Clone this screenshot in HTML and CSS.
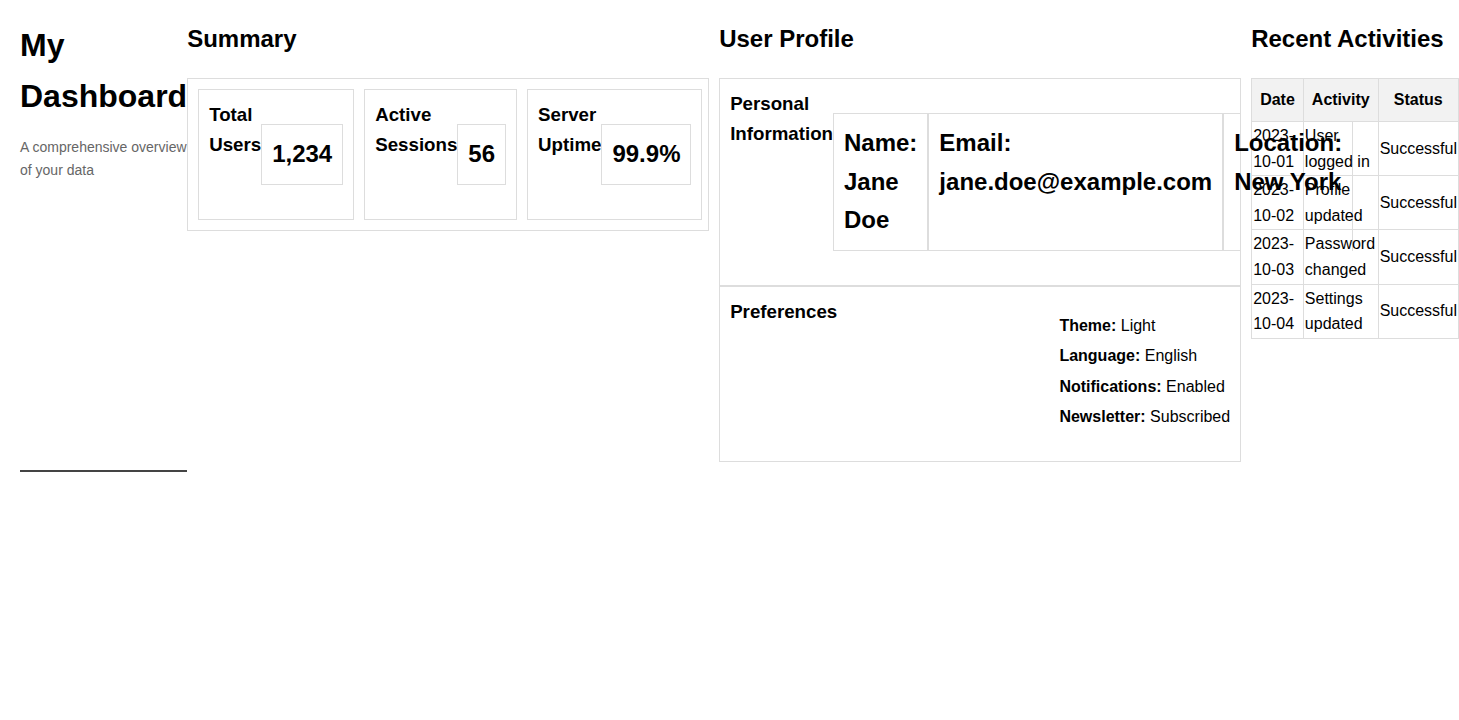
FILE: index.html
```html
<!DOCTYPE html>
<html lang="en">
  <head>
    <meta charset="UTF-8" />
    <meta name="viewport" content="width=device-width, initial-scale=1.0" />
    <title>My Dashboard</title>
    <link rel="stylesheet" href="styles.css">
  </head>
  <body>
    <div class="layout">
      <!-- Sidebar -->
      <aside class="sidebar">
        <h1>My Dashboard</h1>
        <p class="subtitle">A comprehensive overview of your data</p>
      </aside>

      <!-- Summary -->
      <section class="panel summary">
        <h2>Summary</h2>
        <div class="stat-grid">
          <div class="stat-card">
            <h3 class="stat-label">Total Users</h3>
            <p class="stat-value">1,234</p>
          </div>
          <div class="stat-card">
            <h3 class="stat-label">Active Sessions</h3>
            <p class="stat-value">56</p>
          </div>
          <div class="stat-card">
            <h3 class="stat-label">Server Uptime</h3>
            <p class="stat-value">99.9%</p>
          </div>
        </div>
      </section>

      <!-- User profile -->
      <section class="panel profile">
        <h2>User Profile</h2>
        <div class="info-card">
          <h3 class="info-label">Personal Information</h3>
          <p class="info-item"><span class="info-text">Name: Jane Doe</span></p>
          <p class="info-item"><span class="info-text">Email: jane.doe@example.com</span></p>
          <p class="info-item"><span class="info-text">Location: New York</span></p>
        </div>
        <div class="info-card prefs">
          <h3 class="info-label">Preferences</h3>
          <ul class="pref-list">
            <li><strong>Theme:</strong> Light</li>
            <li><strong>Language:</strong> English</li>
            <li><strong>Notifications:</strong> Enabled</li>
            <li><strong>Newsletter:</strong> Subscribed</li>
          </ul>
        </div>
      </section>

      <!-- Recent activities -->
      <section class="panel activities">
        <h2>Recent Activities</h2>
        <table class="activity-table">
          <thead>
            <tr>
              <th>Date</th>
              <th>Activity</th>
              <th>Status</th>
            </tr>
          </thead>
          <tbody>
            <tr>
              <td>2023-10-01</td>
              <td>User logged in</td>
              <td>Successful</td>
            </tr>
            <tr>
              <td>2023-10-02</td>
              <td>Profile updated</td>
              <td>Successful</td>
            </tr>
            <tr>
              <td>2023-10-03</td>
              <td>Password changed</td>
              <td>Successful</td>
            </tr>
            <tr>
              <td>2023-10-04</td>
              <td>Settings updated</td>
              <td>Successful</td>
            </tr>
          </tbody>
        </table>
      </section>
    </div>
  </body>
</html>
```

FILE: styles.css
```css
body {
  margin: 0;
  padding: 20px 0 20px 20px;
  font-family: "Liberation Sans", Arial, sans-serif;
  line-height: 1.6;
  color: #000;
}
.layout {
  display: flex;
  align-items: flex-start;
}
.sidebar {
  flex: none;
  width: min-content;
  height: 450px;
  border-bottom: 2px solid #444;
}
.sidebar h1 {
  margin: 0;
  font-size: 32px;
}
.subtitle {
  margin: 14px 0;
  font-size: 14px;
  color: #666;
}
.panel {
  flex: none;
  background: #fff;
}
.panel + .panel {
  padding-left: 10px;
}
.panel h2 {
  margin: 0 0 20px;
  font-size: 24px;
  white-space: nowrap;
}
.summary,
.profile {
  width: 522px;
}
.activities {
  width: 101px;
}
.stat-grid {
  display: flex;
  gap: 10px;
  padding: 10px;
  border: 1px solid #ddd;
}
.stat-card {
  display: flex;
  padding: 10px;
  border: 1px solid #ddd;
}
.stat-label,
.info-label {
  margin: 0;
  font-size: 18.72px;
}
.stat-value {
  margin: 24px 0;
  padding: 10px;
  border: 1px solid #ddd;
  font-size: 24px;
  font-weight: bold;
}
.info-card {
  display: flex;
  padding: 10px;
  border: 1px solid #ddd;
}
.info-item {
  margin: 24px 0;
  padding: 10px;
  border: 1px solid #ddd;
  font-size: 24px;
  font-weight: bold;
}
/* the overflowing text stays visible over the next column */
.info-text {
  position: relative;
}
.prefs {
  justify-content: space-between;
}
.pref-list {
  margin: 16px 0;
  padding: 0;
  list-style: none;
}
.pref-list li {
  margin-bottom: 5px;
}
.activity-table {
  width: 100%;
  border-collapse: collapse;
}
.activity-table th,
.activity-table td {
  border: 1px solid #ddd;
}
.activity-table th {
  padding: 8px;
  background: #f2f2f2;
}
.activity-table td {
  padding: 1px;
}
```
